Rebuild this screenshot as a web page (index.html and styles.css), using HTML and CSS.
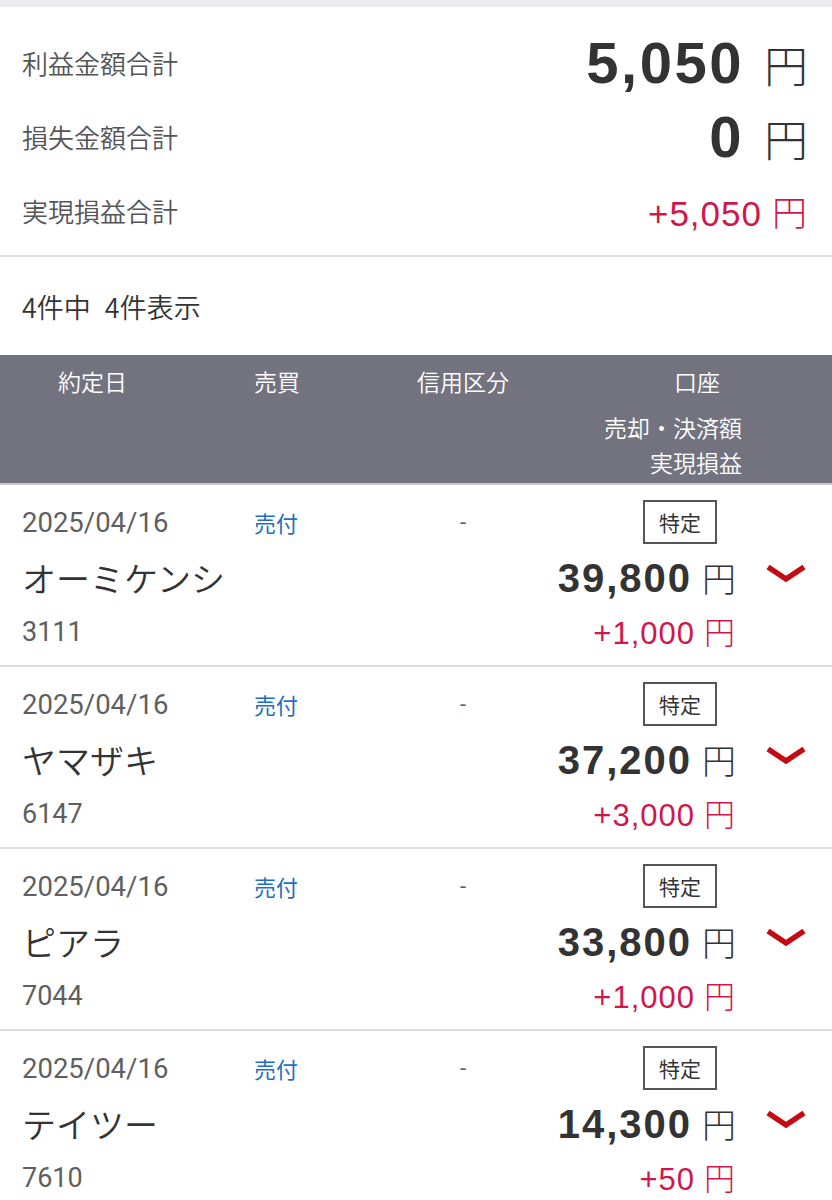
FILE: index.html
```html
<!DOCTYPE html>
<html lang="ja">
<head>
    <meta charset="UTF-8">
    <meta name="viewport" content="width=device-width, initial-scale=1.0">
    <title>実現損益</title>
    <link rel="stylesheet" href="styles.css">
</head>
<body>
    <div class="top-band"></div>

    <section class="summary">
        <div class="summary-row">
            <span class="summary-label">利益金額合計</span>
            <span class="summary-value big"><span class="num">5,050</span><span class="yen">円</span></span>
        </div>
        <div class="summary-row">
            <span class="summary-label">損失金額合計</span>
            <span class="summary-value big"><span class="num">0</span><span class="yen">円</span></span>
        </div>
        <div class="summary-row">
            <span class="summary-label">実現損益合計</span>
            <span class="summary-value plus">+5,050<span class="yen">円</span></span>
        </div>
    </section>

    <div class="count">4件中 4件表示</div>

    <div class="thead">
        <div class="thead-top">
            <span class="th-date">約定日</span>
            <span>売買</span>
            <span class="th-center">信用区分</span>
            <span class="th-account">口座</span>
        </div>
        <div class="thead-sub">売却・決済額</div>
        <div class="thead-sub">実現損益</div>
    </div>

    <div class="trades">
        <div class="trade">
            <span class="date">2025/04/16</span>
            <span class="side">売付</span>
            <span class="credit">-</span>
            <span class="account"><span class="tag">特定</span></span>
            <span class="name">オーミケンシ</span>
            <span class="amount"><span class="num">39,800</span><span class="yen">円</span></span>
            <span class="toggle"><svg width="40" height="22" viewBox="0 0 40 22"><path d="M2 4 L20 16 L38 4" fill="none" stroke="#c40a12" stroke-width="5.5"/></svg></span>
            <span class="code">3111</span>
            <span class="profit">+1,000<span class="yen">円</span></span>
        </div>
        <div class="trade">
            <span class="date">2025/04/16</span>
            <span class="side">売付</span>
            <span class="credit">-</span>
            <span class="account"><span class="tag">特定</span></span>
            <span class="name">ヤマザキ</span>
            <span class="amount"><span class="num">37,200</span><span class="yen">円</span></span>
            <span class="toggle"><svg width="40" height="22" viewBox="0 0 40 22"><path d="M2 4 L20 16 L38 4" fill="none" stroke="#c40a12" stroke-width="5.5"/></svg></span>
            <span class="code">6147</span>
            <span class="profit">+3,000<span class="yen">円</span></span>
        </div>
        <div class="trade">
            <span class="date">2025/04/16</span>
            <span class="side">売付</span>
            <span class="credit">-</span>
            <span class="account"><span class="tag">特定</span></span>
            <span class="name">ピアラ</span>
            <span class="amount"><span class="num">33,800</span><span class="yen">円</span></span>
            <span class="toggle"><svg width="40" height="22" viewBox="0 0 40 22"><path d="M2 4 L20 16 L38 4" fill="none" stroke="#c40a12" stroke-width="5.5"/></svg></span>
            <span class="code">7044</span>
            <span class="profit">+1,000<span class="yen">円</span></span>
        </div>
        <div class="trade">
            <span class="date">2025/04/16</span>
            <span class="side">売付</span>
            <span class="credit">-</span>
            <span class="account"><span class="tag">特定</span></span>
            <span class="name">テイツー</span>
            <span class="amount"><span class="num">14,300</span><span class="yen">円</span></span>
            <span class="toggle"><svg width="40" height="22" viewBox="0 0 40 22"><path d="M2 4 L20 16 L38 4" fill="none" stroke="#c40a12" stroke-width="5.5"/></svg></span>
            <span class="code">7610</span>
            <span class="profit">+50<span class="yen">円</span></span>
        </div>
    </div>
</body>
</html>
```

FILE: styles.css
```css
:root {
    --text: #333333;
    --sub: #5f5f5f;
    --plus: #d0164b;
    --head: #72737f;
    --line: #dcdcdc;
}

body {
    margin: 0;
    padding: 0;
    background: #fff;
    color: var(--text);
    font-family: "Noto Sans CJK JP", "Noto Sans", sans-serif;
}

.top-band {
    height: 7px;
    background: #ececef;
}

.summary {
    padding: 18px 24px 8px 22px;
    border-bottom: 2px solid var(--line);
}

.summary-row {
    height: 74px;
    display: flex;
    justify-content: space-between;
    align-items: center;
}

.summary-label {
    font-size: 26px;
    font-weight: 350;
    color: #555;
}

.summary-value {
    white-space: nowrap;
}

.summary-value.big .num {
    font-family: "Liberation Sans", Arial, sans-serif;
    font-weight: 700;
    font-size: 58px;
    letter-spacing: 2.5px;
}

.summary-value.big .yen {
    font-size: 44px;
    font-weight: 300;
    margin-left: 20px;
}

.summary-value.plus {
    font-family: "Liberation Sans", Arial, sans-serif;
    font-size: 35px;
    color: var(--plus);
    letter-spacing: 1px;
}

.summary-value.plus .yen {
    font-family: "Noto Sans CJK JP", sans-serif;
    font-weight: 300;
    margin-left: 10px;
}

.count {
    height: 98px;
    display: flex;
    align-items: center;
    padding-left: 22px;
    font-size: 27px;
    font-weight: 350;
    word-spacing: 8px;
    color: var(--text);
}

.thead {
    background: var(--head);
    color: #fff;
    font-size: 23px;
    font-weight: 350;
    padding: 8px 90px 3px 22px;
    border-bottom: 2px solid #c9c9cd;
}

.thead-top {
    display: grid;
    grid-template-columns: 232px 146px 126px 1fr;
    line-height: 36px;
    margin-bottom: 11px;
}

.th-date {
    padding-left: 36px;
}

.th-center {
    text-align: center;
}

.th-account {
    text-align: right;
    padding-right: 22px;
}

.thead-sub {
    text-align: right;
    line-height: 35px;
}

.trade {
    display: grid;
    grid-template-columns: 232px 146px 126px 1fr 96px;
    grid-template-rows: 44px 66px 40px;
    padding: 15px 0 15px 22px;
    border-bottom: 2px solid var(--line);
    align-items: center;
}

.date {
    font-family: Roboto, sans-serif;
    font-size: 27.5px;
    color: var(--sub);
}

.side {
    font-size: 22px;
    color: #1f6fc2;
}

.credit {
    text-align: center;
    font-family: Roboto, sans-serif;
    font-size: 22px;
    color: var(--sub);
}

.account {
    text-align: right;
}

.tag {
    display: inline-block;
    box-sizing: border-box;
    width: 74px;
    height: 44px;
    line-height: 40px;
    text-align: center;
    border: 2px solid #555;
    font-size: 21px;
    color: var(--text);
    margin-right: 19px;
}

.name {
    grid-column: 1 / 4;
    font-size: 34px;
    font-weight: 350;
    color: var(--text);
}

.amount {
    text-align: right;
    white-space: nowrap;
}

.amount .num {
    font-family: "Liberation Sans", Arial, sans-serif;
    font-weight: 700;
    font-size: 40px;
    letter-spacing: 2px;
}

.amount .yen {
    font-size: 34px;
    font-weight: 300;
    margin-left: 10px;
}

.toggle {
    align-self: start;
    padding: 19px 0 0 30px;
    line-height: 0;
}

.code {
    grid-column: 1 / 4;
    font-family: Roboto, sans-serif;
    font-size: 27px;
    color: var(--sub);
    padding-top: 3px;
}

.profit {
    grid-column: 4;
    text-align: right;
    white-space: nowrap;
    font-family: "Liberation Sans", Arial, sans-serif;
    font-size: 31px;
    letter-spacing: 1px;
    color: var(--plus);
}

.profit .yen {
    font-family: "Noto Sans CJK JP", sans-serif;
    font-weight: 300;
    margin-left: 9px;
}
```
